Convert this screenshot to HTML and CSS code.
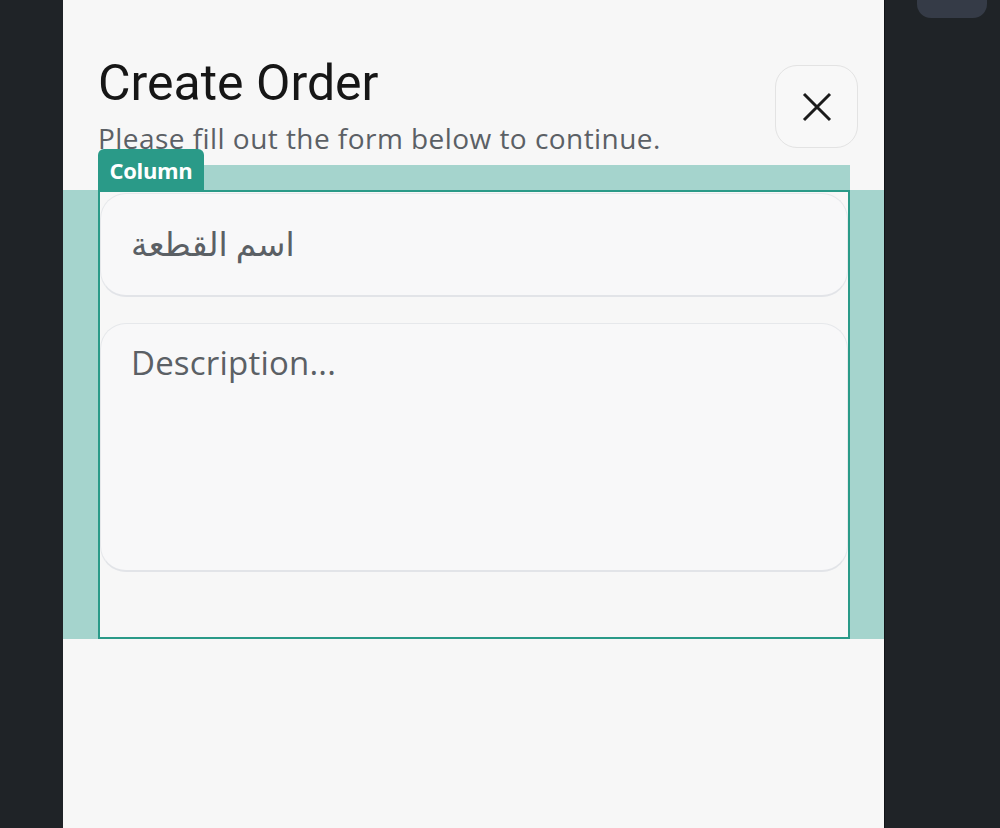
FILE: index.html
```html
<!DOCTYPE html>
<html lang="en">
<head>
    <meta charset="UTF-8">
    <meta name="viewport" content="width=device-width, initial-scale=1.0">
    <title>Create Order</title>
    <link rel="stylesheet" href="styles.css">
</head>
<body>

<div class="screen">
    <!-- Hoja del formulario -->
    <div class="sheet">
        <div class="sheet-header">
            <div class="titles">
                <h1>Create Order</h1>
                <p>Please fill out the form below to continue.</p>
            </div>
            <button class="close-btn" aria-label="Close">
                <svg width="30" height="30" viewBox="0 0 30 30">
                    <path d="M2 2 L28 28 M28 2 L2 28" stroke="#1b1b1b" stroke-width="3" fill="none"/>
                </svg>
            </button>
        </div>

        <!-- Inspector overlay del widget Column -->
        <div class="inspect">
            <span class="inspect-tag">Column</span>
            <div class="inspect-top"></div>
            <div class="inspect-body">
                <div class="column">
                    <input type="text" class="field" placeholder="اسم القطعة">
                    <textarea class="field area" placeholder="Description..."></textarea>
                </div>
            </div>
        </div>
    </div>

    <div class="side">
        <div class="side-chip"></div>
    </div>
</div>

</body>
</html>
```

FILE: styles.css
```css
:root {
    --color-fondo: #1f2327;
    --color-hoja: #f7f7f7;
    --color-texto: #161616;
    --color-gris: #5b6065;
    --color-borde: #e2e4e8;
    --color-teal: #2a9a88;
    --color-teal-claro: #a5d4cd;
}

body {
    margin: 0;
    padding: 0;
    background-color: var(--color-fondo);
    font-family: Roboto, "DejaVu Sans", sans-serif;
    height: 828px;
    overflow: hidden;
}

.screen {
    display: flex;
    height: 828px;
}

.side {
    flex: 1;
    padding-left: 33px;
}

.side-chip {
    width: 70px;
    height: 18px;
    background-color: #353b47;
    border-radius: 0 0 14px 14px;
}

.sheet {
    flex: 0 0 821px;
    margin-left: 63px;
    background-color: var(--color-hoja);
    box-shadow: 1px 0 0 #111418;
}

.sheet-header {
    display: flex;
    justify-content: space-between;
    align-items: flex-start;
    padding: 53px 26px 0 35px;
}

.titles h1 {
    margin: 0;
    font-size: 50px;
    line-height: 60px;
    font-weight: 400;
    color: var(--color-texto);
}

.titles p {
    margin: 10px 0 0 0;
    font-family: "Open Sans", sans-serif;
    font-size: 28px;
    letter-spacing: 0.45px;
    line-height: 31px;
    color: var(--color-gris);
}

.close-btn {
    width: 83px;
    height: 83px;
    margin-top: 12px;
    border: 1px solid #e3e3e3;
    border-radius: 22px;
    background-color: #f8f8f8;
    display: flex;
    align-items: center;
    justify-content: center;
    padding: 0;
    cursor: pointer;
}

.inspect {
    position: relative;
    margin-top: 11px;
}

.inspect-tag {
    position: absolute;
    left: 35px;
    top: -16px;
    width: 106px;
    height: 41px;
    box-sizing: border-box;
    padding-top: 6px;
    text-align: center;
    background-color: var(--color-teal);
    color: #ffffff;
    font-family: "Open Sans", sans-serif;
    font-weight: 700;
    font-size: 22px;
    letter-spacing: -0.3px;
    border-radius: 6px 6px 0 0;
}

.inspect-top {
    height: 25px;
    margin: 0 34px 0 35px;
    background-color: var(--color-teal-claro);
}

.inspect-body {
    background-color: var(--color-teal-claro);
    padding: 0 34px 0 35px;
}

.column {
    border: 2px solid var(--color-teal);
    background-color: var(--color-hoja);
    height: 444px;
    padding-top: 1px;
    display: flex;
    flex-direction: column;
    gap: 26px;
}

.field {
    display: block;
    box-sizing: border-box;
    width: 100%;
    height: 104px;
    margin: 0;
    padding: 0 30px;
    border: 1.5px solid #e6e8eb;
    border-bottom: 2.5px solid var(--color-borde);
    border-radius: 26px;
    background-color: #f8f8f9;
    font-family: Roboto, "DejaVu Sans", sans-serif;
    font-size: 33px;
    color: var(--color-texto);
    outline: none;
    resize: none;
}

.field::placeholder {
    color: var(--color-gris);
}

.area {
    height: 249px;
    padding-top: 16px;
    font-family: "Open Sans", sans-serif;
    font-size: 33px;
    letter-spacing: 0.2px;
}
```
